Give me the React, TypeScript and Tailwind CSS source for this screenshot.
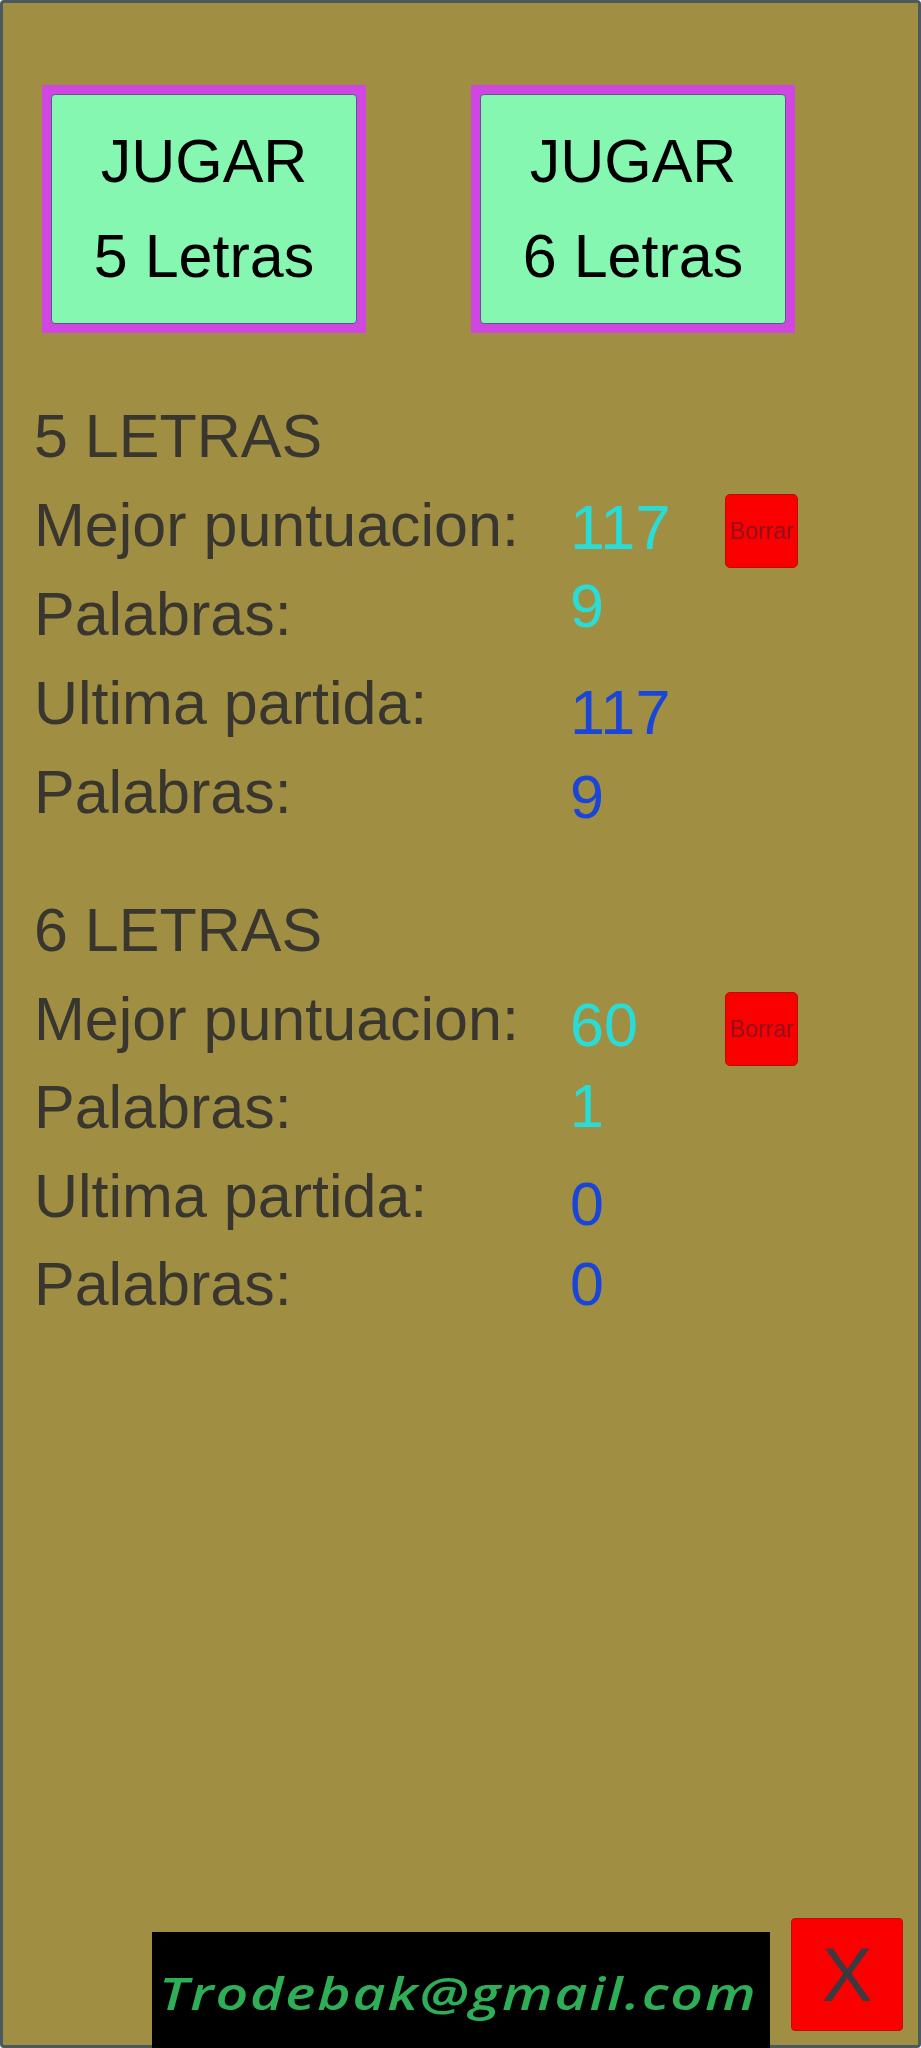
export default function App() {
  return (
    <div className="w-[921px] h-[2048px] flex flex-col bg-[#a08f42] border-[3px] border-[#4a5a60] rounded-[4px] font-['Liberation_Sans',Arial,sans-serif] text-[61px] text-[#38362e]">
      <div className="flex gap-[105px] mt-[82px] ml-[39px]">
        <PlayButton line="5 Letras" />
        <PlayButton line="6 Letras" />
      </div>

      <section className="flex mt-[59px] ml-[31px]">
        <div className="w-[536px] leading-[89px]">
          <div>5 LETRAS</div>
          <div>Mejor puntuacion:</div>
          <div>Palabras:</div>
          <div>Ultima partida:</div>
          <div>Palabras:</div>
        </div>
        <div className="w-[155px] leading-[60px]">
          <div className="mt-[105px] text-[63px] text-[#2adcd8]">117</div>
          <div className="mt-[19px] text-[#2adcd8]">9</div>
          <div className="mt-[46px] text-[63px] text-[#1a46d8]">117</div>
          <div className="mt-[25px] text-[#1a46d8]">9</div>
        </div>
        <BorrarButton className="mt-[102px]" />
      </section>

      <section className="flex mt-[49px] ml-[31px]">
        <div className="w-[536px] leading-[88.5px]">
          <div>6 LETRAS</div>
          <div>Mejor puntuacion:</div>
          <div>Palabras:</div>
          <div>Ultima partida:</div>
          <div>Palabras:</div>
        </div>
        <div className="w-[155px] leading-[60px]">
          <div className="mt-[109px] text-[#2adcd8]">60</div>
          <div className="mt-[21px] text-[#2adcd8]">1</div>
          <div className="mt-[38px] text-[#1a46d8]">0</div>
          <div className="mt-[20px] text-[#1a46d8]">0</div>
        </div>
        <BorrarButton className="mt-[106px]" />
      </section>

      <footer className="mt-auto ml-[149px] flex items-end gap-[21px] -mb-[3px]">
        <div className="w-[618px] h-[116px] bg-black pl-[7px] pt-[30px] font-['Open_Sans',sans-serif] text-[46px] leading-[60px] text-[#2fae58] whitespace-nowrap">
          <span className="inline-block origin-left scale-x-[1.24] italic font-semibold tracking-[1.5px]">Trodebak@gmail.com</span>
        </div>
        <button className="w-[112px] h-[113px] mb-[17px] flex items-center justify-center bg-[#fb0000] border border-[#c00c0c] rounded-[4px] text-[76px] leading-none text-[#3a3a40]">
          X
        </button>
      </footer>
    </div>
  );
}

function PlayButton({ line }: { line: string }) {
  return (
    <div className="w-[324px] h-[248px] p-[9px] bg-[#d046e0]">
      <button className="w-full h-full flex flex-col items-center justify-center bg-[#86f7b0] border border-[#5a5a8a] rounded-[4px] text-black leading-[95px]">
        <span>JUGAR</span>
        <span>{line}</span>
      </button>
    </div>
  );
}

function BorrarButton({ className }: { className: string }) {
  return (
    <button className={`${className} w-[73px] h-[74px] flex items-center justify-center bg-[#fb0000] border border-[#b80c0c] rounded-[5px] text-[23px] leading-none text-[#96101c]`}>
      Borrar
    </button>
  );
}
